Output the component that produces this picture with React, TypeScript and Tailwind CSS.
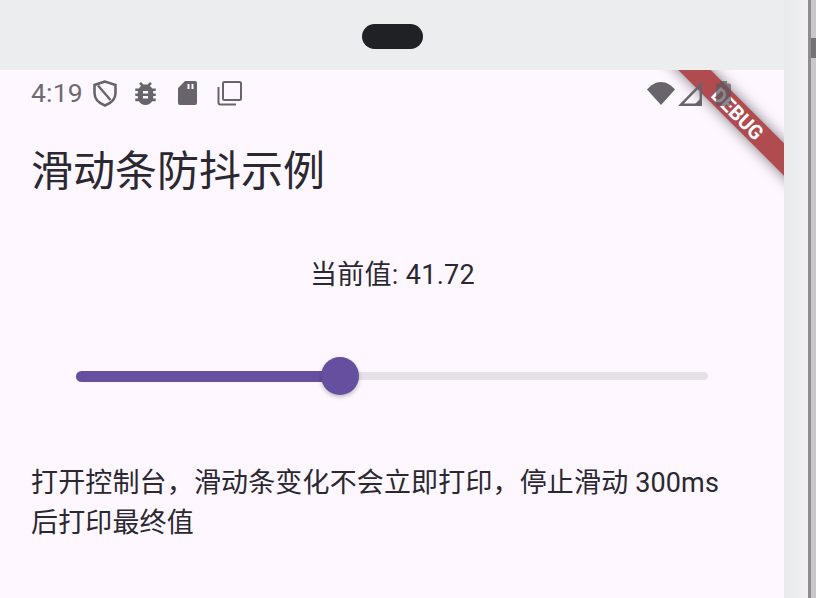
export default function App() {
  return (
    <div className="w-[816px] h-[598px] overflow-hidden relative bg-[#ebedee] font-['Roboto','Noto_Sans_CJK_SC',sans-serif] flex flex-col">
      <div className="w-[784px] h-[70px] shrink-0 flex justify-center pt-[24px]">
        <div className="w-[61px] h-[25px] rounded-full bg-[#1f2125]" />
      </div>
      <div className="w-[784px] flex-1 bg-[#fef7ff] relative overflow-hidden">
        <div className="relative z-10 h-[46px] flex items-center pl-[31px] pr-[53px] text-[#6d6a72]">
          <span className="text-[26.500px] leading-none mr-[10px] tracking-[0.2px]">4:19</span>
          <svg width="24" height="27" viewBox="0 0 24 27" className="mr-[18px]" fill="none" stroke="#67646c" strokeWidth="2.600"><path d="M12 1.500 1.500 5v8c0 5.500 4 10 10.500 12.500C18.500 23 22.500 18.500 22.500 13V5z" /><path d="M5 5.500l12.500 14.500" strokeWidth="2.400" /></svg>
          <svg width="21" height="23" viewBox="4 3 16 18" className="mr-[22px]" fill="#67646c"><path d="M20 8h-2.810c-.450-.780-1.070-1.450-1.820-1.960L17 4.410 15.590 3l-2.170 2.170C12.960 5.060 12.490 5 12 5c-.490 0-.960.060-1.410.170L8.410 3 7 4.410l1.620 1.630C7.880 6.550 7.260 7.220 6.810 8H4v2h2.090c-.050.330-.090.660-.090 1v1H4v2h2v1c0 .340.040.670.090 1H4v2h2.810c1.040 1.790 2.970 3 5.190 3s4.150-1.210 5.190-3H20v-2h-2.090c.050-.330.090-.660.090-1v-1h2v-2h-2v-1c0-.340-.040-.670-.090-1H20V8zm-6 8h-4v-2h4v2zm0-4h-4v-2h4v2z" /></svg>
          <svg width="19" height="24" viewBox="0 0 19 24" className="mr-[20px]" fill="#67646c"><path fillRule="evenodd" d="M7 0h10a2 2 0 0 1 2 2v20a2 2 0 0 1-2 2H2a2 2 0 0 1-2-2V7zM9.500 3v5h2V3zm4 0v5h2V3z" /></svg>
          <svg width="25" height="25" viewBox="0 0 25 25" fill="none" stroke="#67646c" strokeWidth="2"><rect x="6" y="1" width="18" height="18" rx="1.500" /><path d="M1.500 6v15.500a2 2 0 0 0 2 2H19" /></svg>
          <div className="flex-1" />
          <svg width="28" height="25" viewBox="0 0 28 25" className="mr-[3px]" fill="#67646c"><path d="M14 24 0 8.500C3.500 4.500 8.500 1 14 1s10.500 3.500 14 7.500z" /></svg>
          <svg width="24" height="25" viewBox="0 0 24 25" className="mr-[14px]" fill="none" stroke="#67646c" strokeWidth="2.400"><path d="M22.800 3.500V23.800H2.800z" /><path d="M22.800 19v4.800H18z" fill="#67646c" /></svg>
          <svg width="15" height="25" viewBox="0 0 15 25" fill="#5a575e" fillOpacity="0.7"><path d="M4 2.500V0h7v2.500h2a2 2 0 0 1 2 2V23a2 2 0 0 1-2 2H2a2 2 0 0 1-2-2V4.500a2 2 0 0 1 2-2z" /></svg>
        </div>
        <h1 className="text-[42px] leading-[48px] text-[#2a2830] pl-[31px] mt-[32px] font-normal">滑动条防抖示例</h1>
        <p className="text-[27px] leading-[32px] text-[#2a2830] text-center mt-[63px] ml-[1px] tracking-[0.3px]">当前值: 41.72</p>
        <div className="mx-[76px] mt-[66px] h-[38px] flex items-center relative">
          <div className="w-[264px] h-[11px] rounded-l-full bg-[#65509f]" />
          <div className="flex-1 h-[8px] rounded-r-full bg-[#e6e0e9]" />
          <div className="absolute left-[245px] top-0 w-[38px] h-[38px] rounded-full bg-[#65509f] shadow-[0_2px_4px_rgba(0,0,0,0.25)]" />
        </div>
        <p className="text-[27px] leading-[40px] text-[#2a2830] pl-[31px] pr-[40px] mt-[68px] tracking-[0.15px]">打开控制台，滑动条变化不会立即打印，停止滑动 300ms 后打印最终值</p>
        <div className="absolute top-[32px] right-[-54px] w-[200px] h-[23px] flex items-center justify-center rotate-45 bg-[#b04c50] text-white font-bold text-[20px] leading-none shadow-[0_0_14px_rgba(0,0,0,0.5)]">DEBUG</div>
      </div>
      <div className="absolute top-0 left-[784px] w-[24px] h-full bg-gradient-to-r from-[#e8e9ea] to-[#f1f1f1]" />
      <div className="absolute top-0 right-0 w-[8px] h-full border-l-[3px] border-[#8f8b90] bg-[#cbc7ca]">
        <div className="h-[20px] mt-[38px] bg-[#757176]" />
      </div>
    </div>
  );
}
